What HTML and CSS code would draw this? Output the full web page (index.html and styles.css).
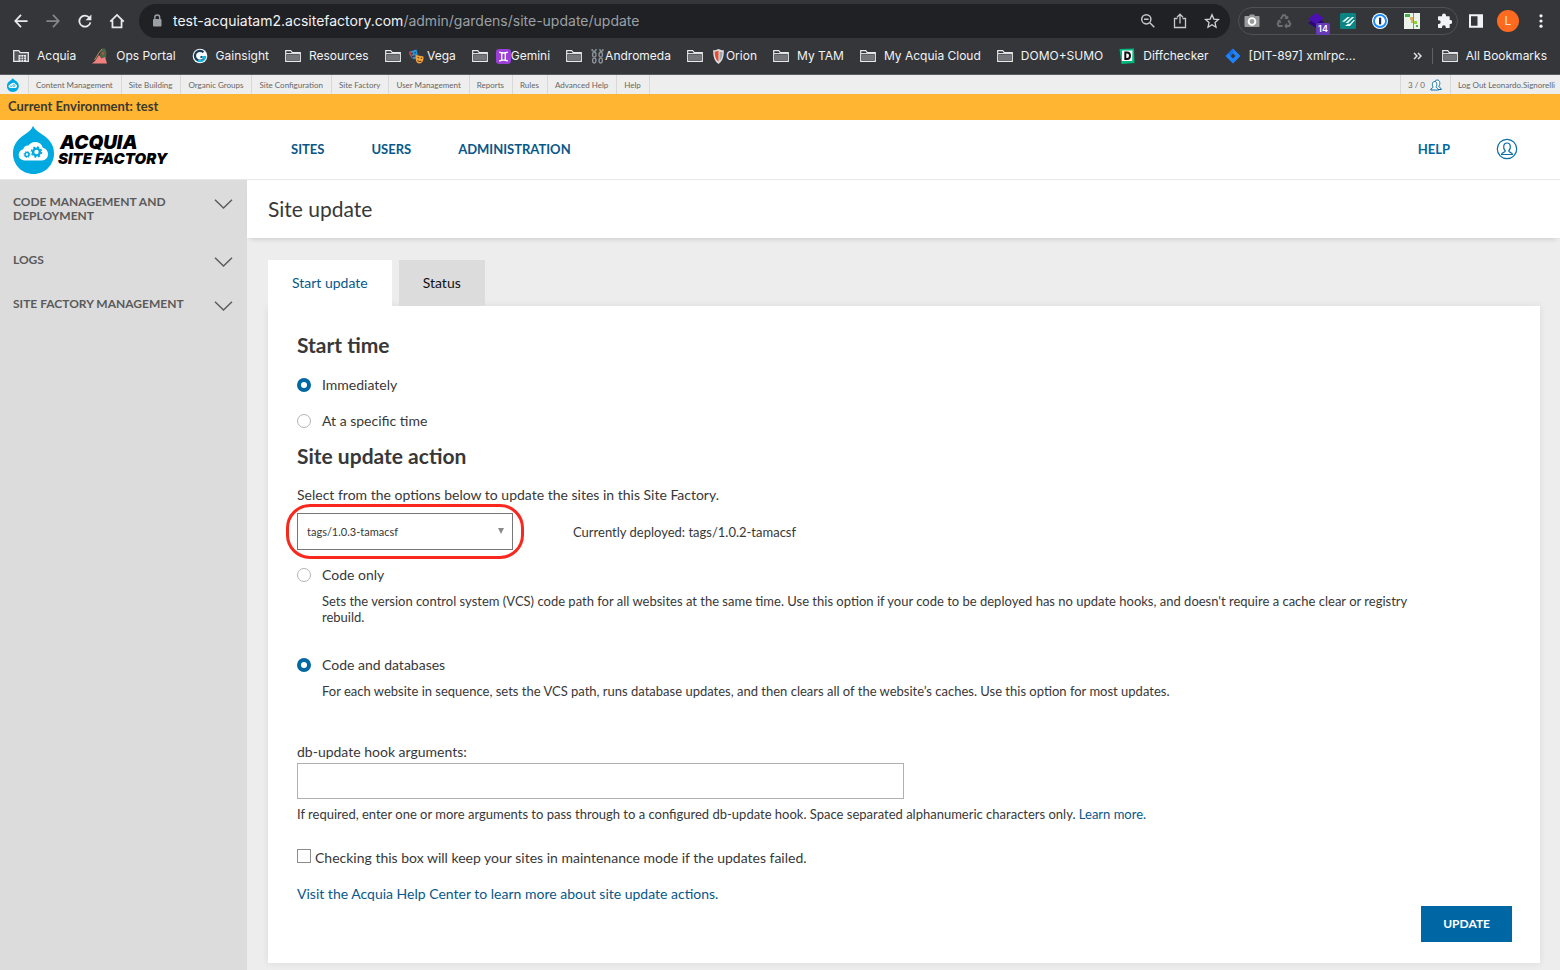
FILE: index.html
```
<!DOCTYPE html>
<html lang="en">
<head>
<meta charset="utf-8">
<title>Site update</title>
<link rel="stylesheet" href="styles.css">
</head>
<body>
<svg class="defs" aria-hidden="true">
  <symbol id="folder" viewBox="0 0 16 16"><path d="M.7 13.300V2.700h5l1.600 2h8v8.600z" fill="#35363a" stroke="#e8eaed" stroke-width="1.200"/><path d="M2 6.600h12v5.500H2z" fill="#747679"/><path d="M1 5.600h14" stroke="#e8eaed"/></symbol>
  <symbol id="chevron" viewBox="0 0 18 10"><path d="M.5.700 9 9 17.500.700" fill="none" stroke="#5a5a5a" stroke-width="1.400"/></symbol>
  <symbol id="drop" viewBox="0 0 42 48"><path d="M20 0c2 4 6 6.500 10 9 7 4.500 11 10.500 11 18.500C41 39 32 48 20.500 48S0 39 0 27.500C0 19.500 4 13.500 11 9c4-2.500 7.500-5 9-9z" fill="#00a9e0"/><path d="M11.500 34.500a5.700 5.700 0 0 1-1.200-11.300 4.500 4.500 0 0 1 5.200-3.700 8 8 0 0 1 14.300 2.300A6.400 6.400 0 0 1 29 34.500z" fill="#fff"/><circle cx="23.500" cy="26" r="3.400" fill="none" stroke="#00a9e0" stroke-width="2.400"/><circle cx="23.500" cy="26" r="5" fill="none" stroke="#00a9e0" stroke-width="1.500" stroke-dasharray="2 1.927"/><circle cx="14" cy="28.500" r="2" fill="none" stroke="#00a9e0" stroke-width="1.500"/><circle cx="14" cy="28.500" r="3" fill="none" stroke="#00a9e0" stroke-width=".9" stroke-dasharray="1.200 1.156"/></symbol>
</svg>

<div class="browser">
  <div class="toolbar">
    <div class="history">
      <button aria-label="Back"><svg viewBox="0 0 16 16"><path d="M15.500 8H2M8 1 1.500 8 8 15" fill="none" stroke="#e8eaed" stroke-width="2"/></svg></button>
      <button aria-label="Forward"><svg viewBox="0 0 16 16"><path d="M.5 8h13M8 1l6.500 7L8 15" fill="none" stroke="#85868a" stroke-width="2"/></svg></button>
      <button aria-label="Reload"><svg viewBox="0 0 16 16"><path d="M13 4.200A6.400 6.400 0 1 0 14.200 9.500" fill="none" stroke="#e8eaed" stroke-width="2"/><path d="M15.300.5V7H8.600z" fill="#e8eaed"/></svg></button>
      <button aria-label="Home"><svg viewBox="0 0 16 16"><path d="M.3 8.800 8 1l7.700 7.800M2.800 7v8.200h10.400V7" fill="none" stroke="#e8eaed" stroke-width="2"/></svg></button>
    </div>
    <div class="omnibox">
      <svg class="lock" viewBox="0 0 10 14"><rect x="1" y="5" width="8.500" height="7.500" rx="1" fill="#9aa0a6"/><path d="M2.800 5.500V3.500a2.400 2.400 0 0 1 4.900 0v2" fill="none" stroke="#9aa0a6" stroke-width="1.400"/></svg>
      <span class="url"><span class="host">test-acquiatam2.acsitefactory.com</span>/admin/gardens/site-update/update</span>
      <svg class="icon" viewBox="0 0 16 16" fill="none" stroke="#c4c7cb" stroke-width="1.500"><circle cx="6.300" cy="6.300" r="4.600"/><path d="M9.800 9.800l4.500 4.500M4 6.300h4.600"/></svg>
      <svg class="icon" viewBox="0 0 16 16" fill="none" stroke="#c4c7cb" stroke-width="1.300"><path d="M5.500 5.500h-3v9h11v-9h-3M8 10.500V1.500M5 4.200l3-3 3 3"/></svg>
      <svg class="icon" viewBox="0 0 16 16" fill="none" stroke="#d0d3d6" stroke-width="1.300"><path d="M8 1.800l1.800 4.300 4.700.4-3.500 3.100 1 4.600L8 11.800l-4 2.400 1-4.600L1.500 6.500l4.700-.4z"/></svg>
    </div>
    <div class="extensions">
      <svg class="icon" viewBox="0 0 16 16"><path d="M5 3l1-1.500h4L11 3h3.500c.8 0 1 .3 1 1v9c0 .8-.3 1-1 1h-13c-.7 0-1-.3-1-1V4c0-.7.300-1 1-1z" fill="#9a9b9d"/><circle cx="8" cy="8.500" r="3.400" fill="#9a9b9d" stroke="#fff" stroke-width="1.900"/></svg>
      <svg class="icon" viewBox="0 0 16 16" fill="none" stroke="#6d6e72" stroke-width="2"><path d="M4.800 6 7 2.200h2l1.700 2.900M12.300 7.300l2 3.700-1 1.900H9.500M6.600 13H2.700l-1-1.900L3.400 8"/><path d="M8.700 5.500h3V3M11 10.700 9 13l2 2M1.500 8.200l2.200-.9L4.600 10" stroke-width="1.200"/></svg>
      <span class="ext-badged"><svg class="icon" viewBox="0 0 16 16"><path d="M8 4.500l8 4.500-8 6-8-5z" fill="#2b0a78"/><path d="M8 0l8 5-8 6-8-5z" fill="#4a10b0"/></svg><span class="badge">14</span></span>
      <svg class="icon" viewBox="0 0 16 16"><rect width="16" height="16" rx="1.500" fill="#0b8584"/><path d="M2 8.800 7.500 4H10L4.500 8.800zM5.500 10 12 4h2.200L8 10zM5 13l3-2.200h2L13.500 7H15l-5 6z" fill="#e9fffb"/></svg>
      <svg class="icon" viewBox="0 0 16 16"><circle cx="8" cy="8" r="8" fill="#fff"/><circle cx="8" cy="8" r="6" fill="#fff" stroke="#1a8cff" stroke-width="1.900"/><rect x="7" y="4.500" width="2.200" height="7" rx=".8" fill="#1b2b49"/></svg>
      <svg class="icon" viewBox="0 0 16 16"><path fill="#edf3ea" d="M0 0h16v16H0z"/><path fill="#3db54a" d="M1 1h5v3H1zM12 12h2v2h-2z"/><path fill="#d6b35c" d="M6 4h4v3H6zM7 7h3v3H7z"/><path fill="#8ed13f" d="M10 8h3v3h-3z"/><path fill="#29b6c6" d="M9 0h1v16H9z"/></svg>
      <svg class="icon" viewBox="0 0 16 16"><path d="M6 3.300V2.500a2 2 0 0 1 4 0v.8h2.700c.7 0 1 .4 1 1V7h.6a2 2 0 0 1 0 4h-.6v3c0 .7-.3 1-1 1h-2.900v-.8a1.900 1.900 0 0 0-3.800 0v.8H3c-.6 0-1-.3-1-1v-3h.8a1.900 1.900 0 0 0 0-3.800H2V4.300c0-.6.4-1 1-1z" fill="#f1f3f4"/></svg>
    </div>
    <svg class="icon" viewBox="0 0 16 16"><path d="M2 2.200h12v11.600H2z" fill="none" stroke="#f1f3f4" stroke-width="2"/><path d="M9.500 2h4.500v12H9.500z" fill="#f1f3f4"/></svg>
    <span class="avatar">L</span>
    <button class="menu" aria-label="Menu"><svg class="icon" viewBox="0 0 16 16" fill="#f1f3f4"><circle cx="8" cy="2.800" r="1.600"/><circle cx="8" cy="8" r="1.600"/><circle cx="8" cy="13.200" r="1.600"/></svg></button>
  </div>
  <nav class="bookmarks" aria-label="Bookmarks">
    <a href="#"><svg class="icon" viewBox="0 0 16 16"><path d="M.7 13.300V2.700h5l1.600 2h8v8.600z" fill="#55575a" stroke="#e8eaed" stroke-width="1.300"/><path d="M5.500 7h7.500v6.500H5.500z" fill="#e8eaed"/><path d="M6.500 9.200h6M6.500 11.400h6M8 7.500v6M10.500 7.500v6" stroke="#55575a" stroke-width=".8"/></svg>Acquia</a>
    <a href="#"><svg class="icon" viewBox="0 0 16 16"><path d="M10 .5h3l1.500 3.500-.5 6-3 2-3-3 .5-5z" fill="#4b6547"/><path d="M0 15.500l3-2.500 4-6 2.500 3.500L13 9l2 6.500z" fill="#f0807e"/><path d="M2.500 12 7.500 4 10 1" fill="none" stroke="#b58b5a"/><circle cx="11" cy="5.500" r="1.200" fill="#d24b3c"/></svg>Ops Portal</a>
    <a href="#"><svg class="icon" viewBox="0 0 16 16"><circle cx="8" cy="8" r="7.300" fill="#f4f8fa"/><path d="M11.500 4.300A5 5 0 1 0 12.800 9H8.500" fill="none" stroke="#173b57" stroke-width="2.200"/><path d="M6 12.500c3 1.500 6.500 0 6.800-3.500h-3" fill="none" stroke="#19b5dd" stroke-width="2.200"/></svg>Gainsight</a>
    <a href="#"><svg class="icon"><use href="#folder"/></svg>Resources</a>
    <a href="#"><svg class="icon"><use href="#folder"/></svg><span class="tagged"><svg class="emoji" viewBox="0 0 14 14"><path d="M0 2.500 7 .5l1 4c.4 3-1 4.500-3 5C2.500 9 1 7 .5 5z" fill="#3191d3"/><path d="M0 3l2-1 2 6-1.500.5z" fill="#c6402f"/><path d="M2 4.500l1.500-.5M5 3.800 6.500 3.500M3 7.500c1-1 2-1 3-.8" stroke="#14334e" fill="none"/><path d="M6.500 5.500l7 1.500c.5 4-1.500 6.700-4 6.500-2.300-.2-4-3-3-8z" fill="#f3a43b"/><path d="M8 8l1.500.3M11 8.500l1.300.3M8 10.500c1 1.500 2.500 1.500 3.500.5" stroke="#7a3d10" fill="none"/></svg>&nbsp;Vega</span></a>
    <a href="#"><svg class="icon"><use href="#folder"/></svg><span class="tagged"><svg class="emoji" viewBox="0 0 14 14"><rect width="14" height="14" rx="3" fill="#9c3fd6"/><path d="M3 3c2.500 1 5.500 1 8 0M3 11.200c2.500-1 5.500-1 8 0M5.300 3.500v7M8.700 3.500v7" stroke="#fff" stroke-width="1.300" fill="none"/></svg>Gemini</span></a>
    <a href="#"><svg class="icon"><use href="#folder"/></svg><span class="tagged"><svg class="emoji" viewBox="0 0 14 14" fill="none" stroke="#8a9299" stroke-width="1.300"><path d="M2 0v1.500l2.500 1L6 0M9 0l1 2.500 2-1V0"/><rect x="2.500" y="3" width="3" height="4.500" rx="1.500"/><rect x="2.500" y="8.500" width="3" height="4.500" rx="1.500"/><rect x="8.500" y="3" width="3" height="4.500" rx="1.500"/><rect x="8.500" y="8.500" width="3" height="4.500" rx="1.500"/></svg>Andromeda</span></a>
    <a href="#"><svg class="icon"><use href="#folder"/></svg><span class="tagged"><svg class="emoji" viewBox="0 0 14 14"><path d="M7 0c2 1 3.500 1.300 5 1.200 0 6-1 10-5 12.800C3 11.200 2 7.200 2 1.200 3.500 1.300 5 1 7 0z" fill="#d9dcde"/><path d="M7 1.500V12C4.500 10 3.500 7 3.400 2.500 5 2.500 6 2 7 1.500z" fill="#e2502f"/><path d="M8 2.500V11c2-2 2.600-4.500 2.700-8z" fill="#9fa6aa"/></svg>Orion</span></a>
    <a href="#"><svg class="icon"><use href="#folder"/></svg>My TAM</a>
    <a href="#"><svg class="icon"><use href="#folder"/></svg>My Acquia Cloud</a>
    <a href="#"><svg class="icon"><use href="#folder"/></svg>DOMO+SUMO</a>
    <a href="#"><svg class="icon" viewBox="0 0 16 16"><path d="M.5 1 15 .5l.5 14.500-13 1z" fill="#00b87c"/><path d="M3 2.500h10.500l-.3 10.500H3z" fill="#fff"/><path d="M6.300 4.500h1.700c4 0 4 6.500 0 6.500H6.300z" fill="none" stroke="#111" stroke-width="2"/></svg>Diffchecker</a>
    <a href="#"><svg class="icon" viewBox="0 0 16 16"><path d="M8 .5 15.500 8 8 15.500.5 8z" fill="#1f83fb"/><path d="M8 5.500 10.500 8 8 10.500 5.500 8z" fill="#35363a"/><path d="M8 .5V5.500L5.500 8 2.800 5.700z" fill="#1471ea"/></svg>[DIT-897] xmlrpc...</a>
    <button class="more" aria-label="More bookmarks"><svg viewBox="0 0 9 8"><path d="M1 1l3 3-3 3M5 1l3 3-3 3" fill="none" stroke="#e8eaed" stroke-width="1.400"/></svg></button>
    <a class="all" href="#"><svg class="icon"><use href="#folder"/></svg>All Bookmarks</a>
  </nav>
</div>

<nav class="adminbar" aria-label="Administration">
  <a class="home" href="#" aria-label="Home"><svg viewBox="0 0 42 48"><use href="#drop"/></svg></a>
  <a href="#">Content Management</a>
  <a href="#">Site Building</a>
  <a href="#">Organic Groups</a>
  <a href="#">Site Configuration</a>
  <a href="#">Site Factory</a>
  <a href="#">User Management</a>
  <a href="#">Reports</a>
  <a href="#">Rules</a>
  <a href="#">Advanced Help</a>
  <a href="#">Help</a>
  <a class="users" href="#">3 / 0 <svg viewBox="0 0 12 12" fill="#fff" stroke="#0b6ea8"><path d="M5 7.800C4 6 4 1 7.200 1s3.200 4.500 1.500 6.300c0 1 2.300.9 2.600 3.200H5z"/><path d="M.7 11c0-2 2.500-2 2.500-3C1.800 6 2.200 2.500 4.700 2.500S7.200 6.500 6 8c0 1 2.600 1 2.600 3z"/></svg></a>
  <a class="logout" href="#">Log Out Leonardo.Signorelli</a>
</nav>
<div class="environment">Current Environment: test</div>

<header class="header">
  <a class="logo" href="#"><svg viewBox="0 0 42 48"><use href="#drop"/></svg><span class="wordmark"><span class="brand">ACQUIA</span><span class="product">SITE FACTORY</span></span></a>
  <nav class="mainnav" aria-label="Main"><a href="#">SITES</a><a href="#">USERS</a><a href="#">ADMINISTRATION</a></nav>
  <a class="help" href="#">HELP</a>
  <button class="account" aria-label="Account"><svg viewBox="0 0 22 22" fill="none" stroke="#0b6ea8" stroke-width="1.200"><circle cx="11" cy="11" r="9.700"/><path d="M5.500 16.500c0-2.500 3.800-1.800 3.800-3.500C6.500 10 7.300 5 11 5s4.500 5 1.700 8c0 1.700 3.800 1 3.800 3.500z"/></svg></button>
</header>

<div class="layout">
  <aside class="sidebar">
    <button>CODE MANAGEMENT AND DEPLOYMENT<svg><use href="#chevron"/></svg></button>
    <button>LOGS<svg><use href="#chevron"/></svg></button>
    <button>SITE FACTORY MANAGEMENT<svg><use href="#chevron"/></svg></button>
  </aside>
  <main class="main">
    <div class="titlebar"><h1>Site update</h1></div>
    <div class="content">
      <div class="tabs"><a class="tab active" href="#">Start update</a><a class="tab" href="#">Status</a></div>
      <form class="card">
        <h2>Start time</h2>
        <label class="choice"><input type="radio" name="start" checked>Immediately</label>
        <label class="choice"><input type="radio" name="start">At a specific time</label>
        <h2 class="second">Site update action</h2>
        <label class="intro" for="tag">Select from the options below to update the sites in this Site Factory.</label>
        <div class="deploy">
          <div class="picker">
            <select id="tag"><option>tags/1.0.3-tamacsf</option></select>
            <svg class="arrow" viewBox="0 0 6 6"><path d="M0 0h6L3 6z" fill="#8a8a8a"/></svg>
            <span class="ring"></span>
          </div>
          <span>Currently deployed: tags/1.0.2-tamacsf</span>
        </div>
        <label class="choice"><input type="radio" name="action">Code only</label>
        <p class="detail">Sets the version control system (VCS) code path for all websites at the same time. Use this option if your code to be deployed has no update hooks, and doesn't require a cache clear or registry rebuild.</p>
        <label class="choice spaced"><input type="radio" name="action" checked>Code and databases</label>
        <p class="detail">For each website in sequence, sets the VCS path, runs database updates, and then clears all of the website’s caches. Use this option for most updates.</p>
        <label class="field-label" for="args">db-update hook arguments:</label>
        <input class="field" id="args" type="text">
        <p class="hint">If required, enter one or more arguments to pass through to a configured db-update hook. Space separated alphanumeric characters only. <a href="#">Learn more.</a></p>
        <label class="check"><input type="checkbox">Checking this box will keep your sites in maintenance mode if the updates failed.</label>
        <a class="visit" href="#">Visit the Acquia Help Center to learn more about site update actions.</a>
        <button class="update" type="button">UPDATE</button>
      </form>
    </div>
  </main>
</div>
</body>
</html>
```
FILE: styles.css
```
* { box-sizing: border-box; }
body {
  margin: 0;
  min-height: 100vh;
  display: flex;
  flex-direction: column;
  background: #ededed;
  color: #383838;
  font: 14px/20px Lato, "Open Sans", sans-serif;
}
a { color: #07588a; text-decoration: none; }
button { border: 0; padding: 0; background: none; font: inherit; color: inherit; }
h1, h2, p { margin: 0; }
svg { display: block; flex: none; }
.defs { position: absolute; width: 0; height: 0; }
.icon { width: 16px; height: 16px; }

/* Browser chrome */
.browser {
  background: #35363a;
  border-bottom: 1px solid #5b5c60;
  color: #f1f3f4;
  font: 12px/16px Inter, Roboto, sans-serif;
}
.toolbar { display: flex; align-items: center; padding: 4px 12px 0 14px; height: 38px; }
.history { display: flex; gap: 18px; margin-right: 15px; }
.history svg { width: 14px; height: 14px; overflow: visible; }
.omnibox {
  flex: 1;
  display: flex;
  align-items: center;
  gap: 16px;
  height: 34px;
  padding: 0 10px 0 13px;
  border-radius: 17px;
  background: #202124;
}
.lock { width: 10px; height: 14px; margin-right: -5px; }
.url { flex: 1; font-size: 14px; color: #9aa0a6; }
.host { color: #f1f3f4; }
.extensions {
  display: flex;
  align-items: center;
  gap: 16px;
  height: 28px;
  margin: 0 10px 0 8px;
  padding: 0 5px;
  border: 1px solid #505155;
  border-radius: 14px;
}
.ext-badged { position: relative; }
.badge {
  position: absolute;
  left: 8px;
  top: 10px;
  width: 14px;
  border-radius: 2px;
  background: #673ab7;
  color: #fff;
  font-size: 9px;
  line-height: 12px;
  font-weight: 600;
  text-align: center;
}
.avatar {
  width: 22px;
  height: 22px;
  margin: 0 14px 0 13px;
  border-radius: 50%;
  background: #ff6a21;
  color: #ffe3d3;
  line-height: 22px;
  text-align: center;
}
.menu { margin-right: -1px; }
.bookmarks { display: flex; align-items: center; gap: 16px; height: 36px; padding: 0 13px; }
.bookmarks a { display: flex; align-items: center; gap: 8px; color: #f1f3f4; white-space: nowrap; }
.tagged { display: flex; align-items: center; }
.emoji { width: 15px; height: 15px; }
.more { margin-left: auto; margin-right: -6px; }
.more svg { width: 9px; height: 8px; }
.bookmarks .all { padding-left: 9px; border-left: 1px solid #5f6165; }

/* Drupal admin bar */
.adminbar { display: flex; height: 19px; background: #eee; }
.adminbar a {
  display: flex;
  align-items: center;
  padding: 0 8px 0 7px;
  border-right: 1px solid #d8d8d8;
  color: #666;
  font-size: 8px;
  line-height: 16px;
  white-space: nowrap;
}
.adminbar svg { width: 12px; height: 12px; }
.adminbar .home { padding: 0 8px 0 6px; }
.adminbar .home svg { width: 14px; height: 14px; }
.adminbar .users { margin-left: auto; border-left: 1px solid #d8d8d8; gap: 5px; }
.adminbar .logout { border: 0; padding: 0 5px 0 7px; }
.environment {
  padding: 2px 8px 4px;
  background: #ffb432;
  color: #3a3a2c;
  font-size: 13px;
  font-weight: 700;
}

/* Site header */
.header {
  display: flex;
  align-items: center;
  height: 60px;
  padding: 0 42px 1px 13px;
  border-bottom: 1px solid #e8e8e8;
  background: #fff;
  font-size: 13px;
  font-weight: 700;
}
.logo { display: flex; align-items: center; gap: 3px; width: 278px; padding-top: 2px; color: #000; }
.logo svg { width: 42px; height: 48px; }
.wordmark { display: flex; flex-direction: column; font-family: Inter, sans-serif; font-weight: 900; font-style: italic; }
.brand { padding-left: 2px; font-size: 19px; line-height: 17px; }
.product { font-size: 15px; line-height: 16px; }
.mainnav { display: flex; flex: 1; gap: 47px; }
.help { margin-right: 46px; color: #0067a5; }
.account svg { width: 22px; height: 22px; }

/* Page */
.layout { display: flex; flex: 1; }
.sidebar {
  display: flex;
  flex-direction: column;
  gap: 30px;
  width: 247px;
  padding: 15px 14px 0 13px;
  background: #dcdcdc;
  color: #5a5a5a;
}
.sidebar button {
  display: flex;
  justify-content: space-between;
  gap: 30px;
  font-size: 12px;
  line-height: 14px;
  font-weight: 700;
  text-align: left;
}
.sidebar svg { width: 19px; height: 10px; margin-top: 4px; }
.main { flex: 1; min-width: 0; }
.titlebar { padding: 15px 21px; background: #fff; box-shadow: 0 4px 5px -3px rgba(0, 0, 0, .15); }
h1 { font-size: 21px; line-height: 28px; font-weight: 400; }
.content { padding: 22px 20px 7px 21px; }
.tabs { display: flex; gap: 7px; }
.tab { padding: 13px 24px; background: #dcdcdc; color: #111; }
.tab.active { position: relative; z-index: 1; background: #fff; color: #07588a; }
.card {
  display: flex;
  flex-direction: column;
  align-items: flex-start;
  padding: 25px 28px 21px 29px;
  background: #fff;
  box-shadow: 0 0 8px rgba(0, 0, 0, .08);
}
h2 { font-size: 21px; line-height: 28px; font-weight: 700; }
.second { margin-top: 11px; }
.choice { display: flex; align-items: center; gap: 11px; margin-top: 16px; }
.deploy + .choice { margin-top: 15px; }
.spaced { margin-top: 30px; }
.choice input {
  appearance: none;
  width: 14px;
  height: 14px;
  margin: 0;
  border: 1px solid #b4b4b4;
  border-radius: 50%;
  background: #fff;
}
.choice input:checked { border: 4px solid #0067a5; }
.intro { margin-top: 15px; }
.deploy { display: flex; align-items: center; gap: 60px; margin-top: 8px; font-size: 13px; }
.picker { position: relative; width: 216px; }
.picker select {
  appearance: none;
  display: block;
  width: 100%;
  height: 37px;
  padding: 0 24px 0 9px;
  border: 1px solid #777;
  border-radius: 0;
  background: #fff;
  color: #383838;
  font: 11px/16px Lato, sans-serif;
}
.arrow { position: absolute; right: 9px; top: 15px; width: 6px; height: 6px; }
.ring {
  position: absolute;
  inset: -9px -11px;
  border: 3px solid #f9281e;
  border-radius: 24px;
  pointer-events: none;
}
.detail { margin-top: 8px; padding: 0 80px 0 25px; font-size: 13px; line-height: 16px; }
.field-label { margin-top: 43px; }
.field {
  width: 607px;
  max-width: 100%;
  height: 36px;
  margin-top: 1px;
  padding: 0 9px;
  border: 1px solid #b0b0b0;
  font: inherit;
}
.hint { margin-top: 7px; font-size: 13px; line-height: 16px; }
.check { display: flex; align-items: center; gap: 4px; margin-top: 26px; }
.check input {
  appearance: none;
  width: 14px;
  height: 14px;
  margin: 0 0 4px;
  border: 1px solid #8c8c8c;
  background: #fff;
}
.visit { margin-top: 16px; }
.update {
  align-self: flex-end;
  height: 36px;
  margin-top: 2px;
  padding: 0 22px;
  background: #0067a5;
  color: #fff;
  font-size: 12px;
  font-weight: 700;
}
```
